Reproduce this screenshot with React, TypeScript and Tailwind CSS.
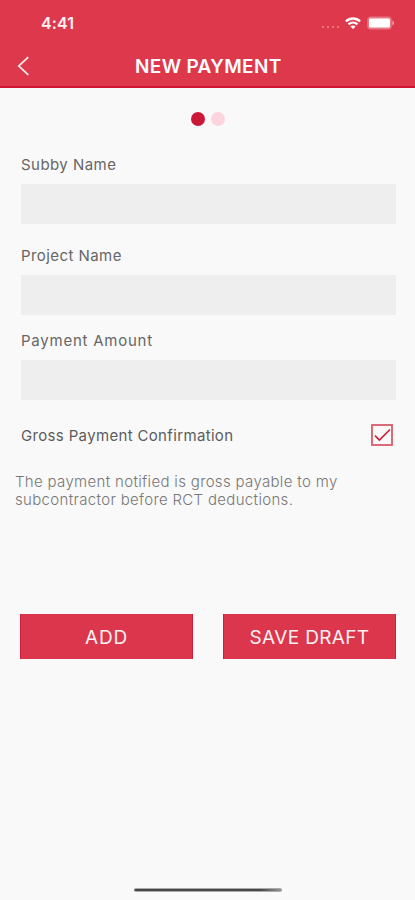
import React from "react";

function StatusBar() {
  return (
    <div className="flex h-[46px] items-center pr-[20px] pl-[41px] text-white">
      <span className="text-[16px] leading-[20px] font-semibold tracking-[0.1px] text-[#fff0f2]">4:41</span>
      <div className="ml-auto flex items-center">
        <div className="mt-[8px] mr-[6px] flex gap-[3px]">
          <i className="h-[2px] w-[2px] bg-white/30" />
          <i className="h-[2px] w-[2px] bg-white/30" />
          <i className="h-[2px] w-[2px] bg-white/30" />
          <i className="h-[2px] w-[2px] bg-white/30" />
        </div>
        <svg width="16" height="12" viewBox="0 0 16 12" fill="none" stroke="white" strokeWidth="2.3">
          <path d="M0.9 4.5C5 .5 11 .5 15.1 4.5" />
          <path d="M3.5 7.4C6.2 4.9 9.8 4.9 12.5 7.4" />
          <path d="M8 12 5.4 9.5C6.9 8.1 9.1 8.1 10.6 9.5Z" fill="white" stroke="none" />
        </svg>
        <svg className="ml-[6px]" width="28" height="14" viewBox="0 0 28 14">
          <rect x="0.2" y="0.5" width="24.5" height="13" rx="3.5" fill="white" fillOpacity=".32" />
          <rect x="2" y="2.5" width="21" height="9" rx="1.5" fill="white" />
          <path d="M25.3 4.5C27.6 5.5 27.6 8.5 25.3 9.5Z" fill="white" fillOpacity=".5" />
        </svg>
      </div>
    </div>
  );
}

function Field({ label, tracking }: { label: string; tracking: string }) {
  return (
    <label className="block">
      <span className={`block h-[20px] text-[15px] leading-[20px] whitespace-nowrap text-[#666666] ${tracking}`}>{label}</span>
      <input className="mt-[9px] block h-[40px] w-full bg-[#eeeeee] outline-none" />
    </label>
  );
}

function Button({ children, tracking }: { children: React.ReactNode; tracking: string }) {
  return (
    <button className={`h-[45px] flex-1 border-x border-[#d01e3e] bg-[#db364c] pt-[2px] text-[19px] leading-[43px] text-[#fff2f2] ${tracking}`}>
      {children}
    </button>
  );
}

export default function App() {
  return (
    <div className="flex h-[900px] w-[415px] flex-col overflow-hidden bg-[#f9f9f9] font-['Inter',sans-serif]">
      <header className="h-[88px] border-b-2 border-[#cf1333] bg-[#de384d]">
        <StatusBar />
        <div className="flex h-[40px] items-center">
          <svg className="ml-[17px]" width="13" height="20" viewBox="0 0 13 20" fill="none" stroke="#fff0f0" strokeWidth="1.7">
            <path d="M11.3 1.2 1.8 10l9.5 8.8" />
          </svg>
          <h1 className="mt-px ml-[105px] text-[19px] leading-[40px] font-semibold tracking-[0.35px] whitespace-nowrap text-white">NEW PAYMENT</h1>
        </div>
      </header>

      <div className="mt-[24px] flex justify-center gap-[6px]">
        <span className="h-[14px] w-[14px] rounded-full bg-[#cc1837]" />
        <span className="h-[14px] w-[14px] rounded-full bg-[#fcd4dd]" />
      </div>

      <main className="flex flex-col pr-[19px] pl-[21px]">
        <div className="mt-[29px]"><Field label="Subby Name" tracking="tracking-[0.45px]" /></div>
        <div className="mt-[22px]"><Field label="Project Name" tracking="tracking-[0.43px]" /></div>
        <div className="mt-[16px]"><Field label="Payment Amount" tracking="tracking-[0.76px]" /></div>
        <div className="mt-[24px] flex h-[22px] items-center justify-between pr-[3px]">
          <span className="mt-[2px] text-[15px] leading-[20px] tracking-[0.34px] whitespace-nowrap text-[#5c5c5c]">Gross Payment Confirmation</span>
          <svg width="22" height="22" viewBox="0 0 22 22" fill="none">
            <rect x="1" y="1" width="20" height="20" fill="#fdf8f8" stroke="#d65c6b" strokeWidth="1.8" />
            <path d="M4 11.6 8.4 16 19 5.5" stroke="#c9243d" strokeWidth="1.7" />
          </svg>
        </div>
      </main>

      <p className="mt-[27px] ml-[15px] h-[36px] text-[15px] leading-[18px] font-light whitespace-nowrap text-[#777777]">
        <span className="block tracking-[0.33px]">The payment notified is gross payable to my</span>
        <span className="block tracking-[0.33px]">subcontractor before RCT deductions.</span>
      </p>

      <div className="mt-[105px] flex gap-[30px] pr-[19px] pl-[20px]">
        <Button tracking="tracking-[0.8px]">ADD</Button>
        <Button tracking="tracking-[0.35px]">SAVE DRAFT</Button>
      </div>

      <div className="mt-auto mb-[8px] ml-[134px] h-[4px] w-[148px] rounded-full border-y border-[#aaa] bg-linear-to-r from-[#484848] from-85% to-[#999]" />
    </div>
  );
}
